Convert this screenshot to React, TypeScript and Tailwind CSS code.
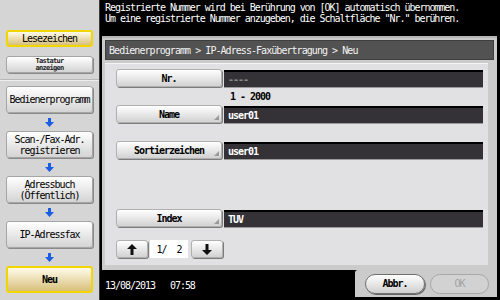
import React from "react";

const mono = "font-['DejaVu_Sans_Mono',monospace]";
const t = "text-[10px] tracking-[-1.03px]";

function DownArrow() {
  return (
    <svg width="9" height="9" viewBox="0 0 9 9" className="block">
      <path d="M3 0h3v4h3L4.5 9 0 4h3z" fill="#1a5ee6" />
    </svg>
  );
}

function Corner() {
  return (
    <svg width="5" height="5" viewBox="0 0 5 5" className="absolute right-[2px] bottom-[2px]">
      <path d="M5 0V5H0z" fill="#9a9a9a" />
    </svg>
  );
}

function SideBtn({ children, active, h = "h-[27px]" }: { children: React.ReactNode; active?: boolean; h?: string }) {
  return (
    <div
      className={`${h} mx-[6px] flex items-center justify-center text-center rounded-[3px] leading-[11px] ${
        active
          ? "border-2 border-[#f2d600] bg-gradient-to-b from-[#fffbea] to-[#d8c07a]"
          : "border border-[#a5a5a5] bg-gradient-to-b from-[#ffffff] to-[#d4d4d4] shadow-[1px_1px_0_#8a8a8a]"
      }`}
    >
      {children}
    </div>
  );
}

function FieldRow({ label, value, corner, dim }: { label: string; value: string; corner?: boolean; dim?: boolean }) {
  return (
    <div className="flex items-center h-[18px]">
      <div className="relative w-[106px] h-[18px] ml-[11px] rounded-[3px] border border-[#b0b0b0] bg-gradient-to-b from-[#ffffff] to-[#d2d2d2] shadow-[1px_1px_0_#7c7c7c] flex items-center justify-center">
        <span className={`${mono} ${t} font-bold text-black`}>{label}</span>
        {corner && <Corner />}
      </div>
      <div className="ml-[2px] w-[259px] h-[17px] bg-[#343236] border-t-2 border-black shadow-[0_1px_0_#9b9b9b] flex items-center pl-[4px]">
        <span className={`${mono} ${t} font-bold ${dim ? "text-[#8a8a8a]" : "text-white"}`}>{value}</span>
      </div>
    </div>
  );
}

export default function App() {
  return (
    <div className="w-[500px] h-[300px] flex bg-black overflow-hidden">
      {/* Left panel */}
      <div className="w-[100px] h-full bg-[#d5d5d5] border-r-[1px] border-[#3a3a3a] flex flex-col">
        <div className="h-[30px]" />
        <SideBtn active h="h-[17px]">
          <span className={`${mono} ${t} text-black`}>Lesezeichen</span>
        </SideBtn>
        <div className="h-[9px]" />
        <SideBtn h="h-[17px]">
          <span className={`${mono} text-[7px] tracking-[-0.7px] leading-[6.5px] font-bold text-[#222]`}>
            Tastatur
            <br />
            anzeigen
          </span>
        </SideBtn>
        <div className="h-[6px]" />
        <div className="h-[2px] border-t border-[#b8b8b8] border-b border-b-[#eeeeee]" />
        <div className="h-[5px]" />
        <SideBtn>
          <span className={`${mono} ${t} text-black`}>Bedienerprogramm</span>
        </SideBtn>
        <div className="h-[18px] flex items-center justify-center"><DownArrow /></div>
        <SideBtn>
          <span className={`${mono} ${t} text-black`}>
            Scan-/Fax-Adr.
            <br />
            registrieren
          </span>
        </SideBtn>
        <div className="h-[18px] flex items-center justify-center"><DownArrow /></div>
        <SideBtn>
          <span className={`${mono} ${t} text-black`}>
            Adressbuch
            <br />
            (Öffentlich)
          </span>
        </SideBtn>
        <div className="h-[18px] flex items-center justify-center"><DownArrow /></div>
        <SideBtn>
          <span className={`${mono} ${t} text-black`}>IP-Adressfax</span>
        </SideBtn>
        <div className="h-[18px] flex items-center justify-center"><DownArrow /></div>
        <SideBtn active>
          <span className={`${mono} ${t} font-bold text-black`}>Neu</span>
        </SideBtn>
      </div>

      {/* Main */}
      <div className="flex-1 flex flex-col">
        <div className={`h-[36px] pl-[5px] pt-[2px] ${mono} ${t} leading-[11px] text-white`}>
          <div>Registrierte Nummer wird bei Berührung von [OK] automatisch übernommen.</div>
          <div>Um eine registrierte Nummer anzugeben, die Schaltfläche "Nr." berühren.</div>
        </div>
        <div className="ml-[2px] mr-[3px] h-[234px] bg-[#cbcbcb] border-t-[2px] border-[#b5b5b5] flex flex-col px-[3px] pt-[2px]">
          <div className="h-[20px] bg-[#525252] border border-[#3e3e3e] flex items-center pl-[3px]">
            <span className={`${mono} text-[10px] tracking-[-0.95px] text-[#f2f2f2]`}>
              Bedienerprogramm &gt; IP-Adress-Faxübertragung &gt; Neu
            </span>
          </div>
          <div className="h-[3px]" />
          <div className="mr-[6px] h-[202px] bg-[#e1e0e2] border-t border-[#f4f4f4] flex flex-col pt-[5px]">
            <FieldRow label="Nr." value="----" dim />
            <div className={`h-[18px] pl-[125px] flex items-center ${mono} ${t} font-bold text-black`}>
              1 - 2000
            </div>
            <FieldRow label="Name" value="user01" corner />
            <div className="h-[18px]" />
            <FieldRow label="Sortierzeichen" value="user01" corner />
            <div className="h-[50px]" />
            <FieldRow label="Index" value="TUV" corner />
            <div className="h-[13px]" />
            <div className="flex items-center h-[18px] ml-[11px]">
              <div className="w-[32px] h-[18px] rounded-[3px] border border-[#b0b0b0] bg-gradient-to-b from-[#ffffff] to-[#d2d2d2] shadow-[1px_1px_0_#7c7c7c] flex items-center justify-center">
                <svg width="10" height="11" viewBox="0 0 10 11">
                  <path d="M5 0L10 5H6.5V11H3.5V5H0z" fill="#111" />
                </svg>
              </div>
              <div className={`ml-[2px] w-[38px] h-[18px] bg-white flex items-center justify-center ${mono} ${t} text-black`}>
                1/&nbsp;&nbsp;2
              </div>
              <div className="ml-[3px] w-[32px] h-[18px] rounded-[3px] border border-[#b0b0b0] bg-gradient-to-b from-[#ffffff] to-[#d2d2d2] shadow-[1px_1px_0_#7c7c7c] flex items-center justify-center">
                <svg width="10" height="11" viewBox="0 0 10 11">
                  <path d="M5 11L10 6H6.5V0H3.5V6H0z" fill="#111" />
                </svg>
              </div>
            </div>
          </div>
        </div>
        <div className="flex h-[30px]">
          <div className={`w-[255px] flex items-center pl-[5px] pt-[1px] ${mono} ${t} text-white`}>
            <span>13/08/2013</span>
            <span className="ml-[15px]">07:58</span>
          </div>
          <div className="flex-1 mr-[3px] mb-[3px] bg-[#cbcbcb] rounded-tl-[3px] flex items-center pl-[10px] gap-[5px]">
            <div className="w-[60px] h-[20px] rounded-full border border-[#6f6f6f] bg-gradient-to-b from-[#ffffff] to-[#cfcfcf] shadow-[1px_1px_0_#666] flex items-center justify-center">
              <span className={`${mono} ${t} font-bold text-black`}>Abbr.</span>
            </div>
            <div className="w-[59px] h-[20px] rounded-full border border-[#a8a8a8] bg-[#d2d2d2] flex items-center justify-center">
              <span className={`${mono} ${t} text-[#a2a2a2]`}>OK</span>
            </div>
          </div>
        </div>
      </div>
    </div>
  );
}
